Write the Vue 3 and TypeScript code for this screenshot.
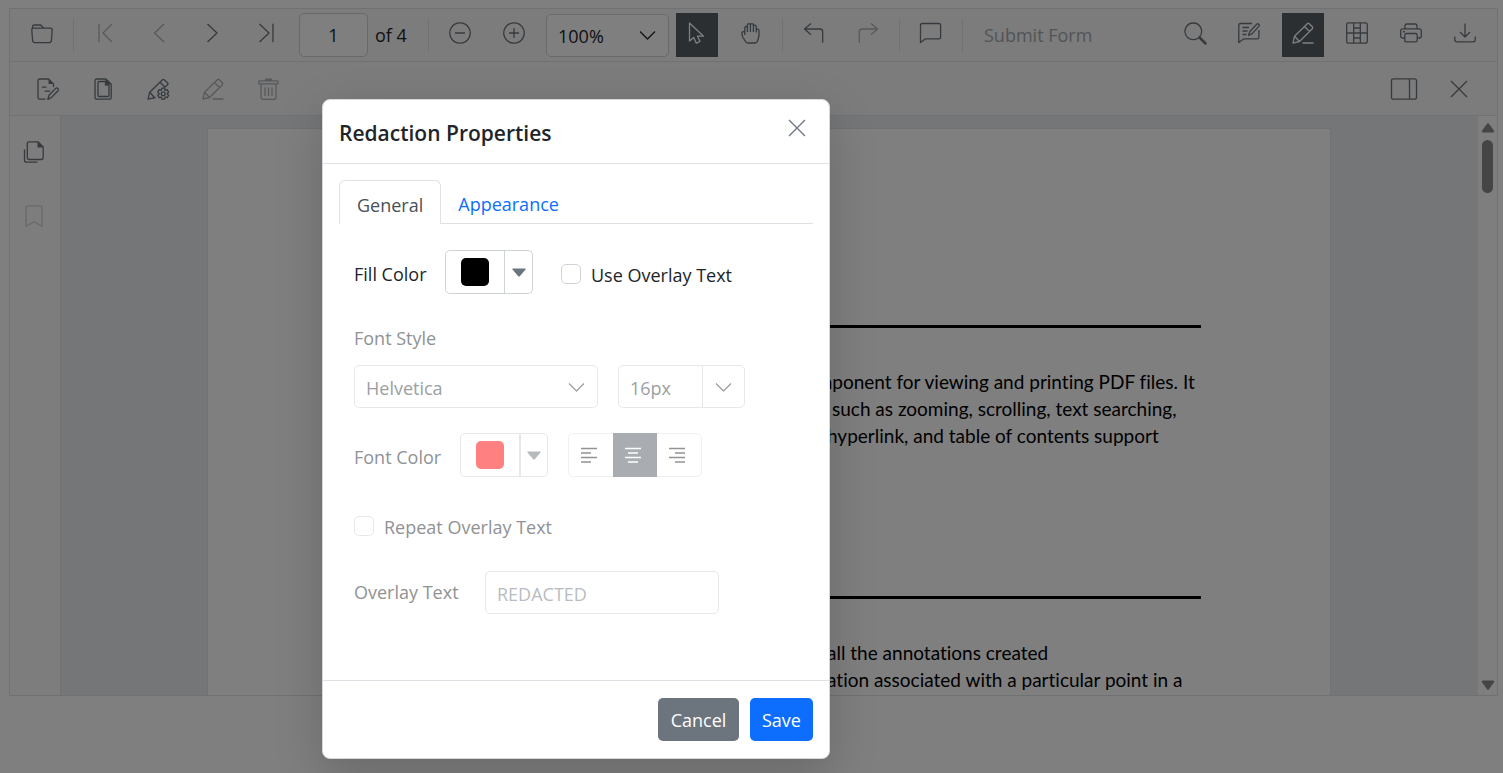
<script setup lang="ts">
import { h, ref, type FunctionalComponent } from 'vue'

interface Glyph {
  line: string
  fill?: string
  bold?: string
}

function gear(cx: number, cy: number): string {
  const points: string[] = []
  for (let i = 0; i < 6; i++) {
    const base = (i * Math.PI) / 3 - Math.PI / 2
    for (const [radius, offset] of [[4, -0.45], [5.7, -0.26], [5.7, 0.26], [4, 0.45]]) {
      const a = base + offset
      points.push(`${(cx + radius * Math.cos(a)).toFixed(2)} ${(cy + radius * Math.sin(a)).toFixed(2)}`)
    }
  }
  return `M${points.join('L')}z`
}

const glyphs: Record<string, Glyph> = {
  folder: { line: 'M.8 8.2q-.2-2 1.8-2h16.800q2 0 1.800 2l-.8 10.200q-.2 2.200-2.200 2.200H3.800Q1.800 20.600 1.600 18.400zM1.500 6.500V5q0-2 2-2h5.500q1 0 1.800 1.200t2.500 2' },
  first: { line: 'M5 1.800V20.200M18 2 9 11l9 9' },
  prev: { line: 'M16 2 6.500 11 16 20' },
  next: { line: 'M5.500 2 15 11l-9.500 9' },
  last: { line: 'M3.500 2l9.500 9-9.500 9M17 1.800V20.200' },
  minus: { line: 'M11 .8a10.200 10.200 0 1 0 .01 0zM6 11h10' },
  plus: { line: 'M11 .8a10.200 10.200 0 1 0 .01 0zM6 11h10M11 6v10' },
  cursor: { line: 'M3.500 1V19L7.700 15.500l2.600 5.700 3.700-1.700-2.500-5.300h6z' },
  hand: { line: 'M4.800 13V5.800a1.300 1.300 0 0 1 2.600 0V10M7.400 6V3.100a1.500 1.500 0 0 1 3 0V10M10.400 3.100a1.500 1.500 0 0 1 3 0V10M13.400 4.500a1.400 1.400 0 0 1 2.800 0V10.500M16.200 8.500a1.400 1.400 0 0 1 2.800 0V14l-1.500 5q-.6 2-2.500 2H8q-1.600 0-2.300-1.300L3 15.500Q1.900 13.500 1.900 11a1.400 1.400 0 0 1 2.900 0' },
  undo: { line: 'M8 1.500 1.500 7 8 12.700M1.500 7H17q2.700 0 2.700 2.700V20.700' },
  redo: { line: 'M14 1.500 20.500 7 14 12.700M20.500 7H5Q2.300 7 2.300 9.700V20.700' },
  comment: { line: 'M.5 20.500V3.200Q.5 1.500 2.200 1.500h16.700q1.700 0 1.700 1.700v12q0 1.700-1.700 1.700H5.200z' },
  search: { line: 'M9.300 1a8.300 8.300 0 1 0 .01 0z', bold: 'M15.500 15.500l6 6' },
  commentEdit: { line: 'M14 1.500H2.500Q.8 1.500.8 3.200V20.500l4.700-3.600h13.700q1.700 0 1.700-1.700V8M4.500 5.500H11M4.500 9H9.500M4.500 12.500h4M10.500 13.500l1.200-3.800 7-7.500q1-1 2.100 0t0 2.200l-6.600 7.200z' },
  pencil: { line: 'M1 21.200l1.500-7L15.300 1.700q1-.9 2 0l3 3q.9 1 0 2L7.500 19.500zM12.500 4.500l5 5M2.500 14.200l5 5.300M10.500 21H21.500' },
  table: { line: 'M2.700.8H19.300q2 0 2 2V19.200q0 2-2 2H2.700q-2 0-2-2V2.800q0-2 2-2zM7.700.8V21.200M14.300.8V21.200M.7 11H21.300M7.700 6h6.600M7.700 16h6.600' },
  print: { line: 'M5 6.800V4q0-2 2-2h8q2 0 2 2V6.800M4.800 16H2.700q-2 0-2-2V8.800q0-2 2-2H19.300q2 0 2 2V14q0 2-2 2H17.200M6.500 11.500h9q1.700 0 1.700 1.700v5q0 1.700-1.700 1.700h-9q-1.700 0-1.700-1.700v-5q0-1.700 1.700-1.700z', fill: 'M3 9h2v1.500H3z' },
  download: { line: 'M11 1.500V15M6 10l5 5 5-5M.8 14.500v3q0 2.300 2.300 2.300H19q2.300 0 2.300-2.300v-3' },
  redactText: { line: 'M8.500 21.200H3q-2 0-2-2V3Q1 1 3 1h8.500l5 5v3M5 9.200h4.500M7.700 13.200h5.500M10.800 21.300l1.200-4 6.700-6.900q1.200-1 2.300 0t0 2.300l-6.700 6.900z', fill: 'M11.500 1v5h5z' },
  redactPages: { line: 'M5 1h9l5.200 5.200V19.200q0 2-2 2H5q-2 0-2-2V3Q3 1 5 1zM7 3.500h6.500V7H17V17.500q0 1-1 1H7q-1 0-1-1V4.500q0-1 1-1z', fill: 'M13.500 1v5.500h5.500z' },
  redactSetup: { line: 'M8.500 19.500 1 21.200l1.700-7L15.500 1.700q.8-.7 1.600 0L20.700 5q.8.800 0 1.600L17.500 9.500M13 4.300l5 5M2.700 14.200l5 5.500M14.300 15.700a1.900 1.900 0 1 0 3.800 0 1.900 1.900 0 1 0-3.800 0z' + gear(16.200, 15.700) },
  trash: { line: 'M2 2.800H21v3H2zM4 5.800V19.300q0 2 2 2h11q2 0 2-2V5.800M8 9.500v8.500M11.500 9.500v8.500M15 9.500v8.500', fill: 'M8 .5h7v2.500H8z' },
  panel: { line: 'M.5.800H21.500q2 0 2 2V19.200q0 2-2 2H.5q-2 0-2-2V2.800q0-2 2-2zM16.500.800V21.200' },
  close: { line: 'M3 3l16 16M19 3 3 19' },
  thumbnails: { line: 'M6.300.8H15l5.200 5.200V16.500q0 2-2 2H6.300q-2 0-2-2V2.800q0-2 2-2zM1.500 8.500V19.200q0 2 2 2H14.500', fill: 'M14.500.8V6.500h5.700z' },
  bookmark: { line: 'M3 21.200V2.800q0-2 2-2H17q2 0 2 2V21.200l-8-4.500z' },
  chevron: { line: 'M3 7.500l7.500 7.500 7.500-7.500' },
  caret: { line: '', fill: 'M5 7.500h12q1 .2.500 1L12 15q-1 1-2 0L4.500 8.500Q4 7.700 5 7.500z' },
  alignLeft: { line: 'M3 4.500H19M3 9h10M3 13.500H19M3 18h10' },
  alignCenter: { line: 'M3 4.500H19M6 9h10M3 13.500H19M6 18h10' },
  alignRight: { line: 'M3 4.500H19M9 9h10M3 13.500H19M9 18h10' },
}

const Icon: FunctionalComponent<{ name: string }> = (props) => {
  const g = glyphs[props.name]
  return h('svg', { viewBox: '0 0 22 22', width: 22, height: 22, 'aria-hidden': 'true', overflow: 'visible' }, [
    h('path', { d: g.line, fill: 'none', stroke: 'currentColor', 'stroke-width': 1.3, 'stroke-linejoin': 'round' }),
    g.fill ? h('path', { d: g.fill, fill: 'currentColor' }) : null,
    g.bold ? h('path', { d: g.bold, fill: 'none', stroke: 'currentColor', 'stroke-width': 2.5, 'stroke-linecap': 'round' }) : null,
  ])
}
Icon.props = ['name']

interface Tool {
  icon: string
  label: string
  off?: boolean
  on?: boolean
}

const navTools: Tool[] = [
  { icon: 'first', label: 'First page', off: true },
  { icon: 'prev', label: 'Previous page', off: true },
  { icon: 'next', label: 'Next page' },
  { icon: 'last', label: 'Last page' },
]
const rightTools: Tool[] = [
  { icon: 'search', label: 'Search' },
  { icon: 'commentEdit', label: 'Annotations' },
  { icon: 'pencil', label: 'Redaction', on: true },
  { icon: 'table', label: 'Form fields' },
  { icon: 'print', label: 'Print' },
  { icon: 'download', label: 'Download' },
]
const redactTools: Tool[] = [
  { icon: 'redactText', label: 'Mark for redaction' },
  { icon: 'redactPages', label: 'Redact pages' },
  { icon: 'redactSetup', label: 'Redaction properties' },
  { icon: 'pencil', label: 'Apply redaction', off: true },
  { icon: 'trash', label: 'Delete', off: true },
]

const pageNumber = ref('1')
const fontSize = ref('16px')
const useOverlay = ref(false)
const repeatOverlay = ref(false)
</script>

<template>
  <div class="app">
    <main class="viewer">
      <div class="toolbar main-bar">
        <button class="tool" aria-label="Open file"><Icon name="folder" /></button>
        <span class="sep"></span>
        <button v-for="t in navTools" :key="t.icon" class="tool" :disabled="t.off" :aria-label="t.label"><Icon :name="t.icon" /></button>
        <label class="pager"><input v-model="pageNumber" class="page-input" aria-label="Page number" /><span>of 4</span></label>
        <span class="sep"></span>
        <button class="tool" aria-label="Zoom out"><Icon name="minus" /></button>
        <button class="tool" aria-label="Zoom in"><Icon name="plus" /></button>
        <div class="pick zoom-pick">
          <select aria-label="Zoom level"><option>100%</option></select>
          <Icon name="chevron" class="pick-icon" />
        </div>
        <button class="tool on" aria-label="Select"><Icon name="cursor" /></button>
        <button class="tool" aria-label="Pan"><Icon name="hand" /></button>
        <span class="sep"></span>
        <button class="tool" aria-label="Undo"><Icon name="undo" /></button>
        <button class="tool" disabled aria-label="Redo"><Icon name="redo" /></button>
        <span class="sep"></span>
        <button class="tool" aria-label="Comment"><Icon name="comment" /></button>
        <span class="sep"></span>
        <button class="submit" disabled>Submit Form</button>
        <div class="right">
          <button v-for="t in rightTools" :key="t.icon" class="tool" :class="{ on: t.on }" :aria-label="t.label"><Icon :name="t.icon" /></button>
        </div>
      </div>
      <div class="toolbar redact-bar">
        <button v-for="t in redactTools" :key="t.icon" class="tool" :disabled="t.off" :aria-label="t.label"><Icon :name="t.icon" /></button>
        <div class="right">
          <button class="tool" aria-label="Redaction panel"><Icon name="panel" /></button>
          <button class="tool" aria-label="Close toolbar"><Icon name="close" /></button>
        </div>
      </div>
      <div class="workspace">
        <nav class="side">
          <button class="tool" aria-label="Thumbnails"><Icon name="thumbnails" /></button>
          <button class="tool faint" disabled aria-label="Bookmarks"><Icon name="bookmark" /></button>
        </nav>
        <div class="canvas">
          <article class="page">
            <hr />
            <div class="para">
              <p class="l1">component for viewing and printing PDF files. It</p>
              <p class="l2">such as zooming, scrolling, text searching,</p>
              <p class="l3">hyperlink, and table of contents support</p>
            </div>
            <hr />
            <div class="para">
              <p class="l3">all the annotations created</p>
              <p class="l3">ation associated with a particular point in a</p>
            </div>
          </article>
        </div>
        <div class="scroll">
          <svg width="14" height="10" viewBox="0 0 14 10"><path d="M6 .8q1-1 2 0l5 7q.6 1.700-1 1.700H2Q.4 9.500 1 7.800z" fill="#8a8a8a" /></svg>
          <div class="thumb"></div>
          <svg class="down" width="14" height="10" viewBox="0 0 14 10"><path d="M6 9.200q1 1 2 0l5-7Q13.600.5 12 .5H2Q.4.500 1 2.200z" fill="#8a8a8a" /></svg>
        </div>
      </div>
    </main>

    <div class="shade"></div>
    <section class="dialog" role="dialog" aria-labelledby="dlg-title">
      <header>
        <h1 id="dlg-title">Redaction Properties</h1>
        <button class="close" aria-label="Close"><Icon name="close" /></button>
      </header>
      <div class="body">
        <div class="tabs" role="tablist">
          <button role="tab" class="tab active" aria-selected="true">General</button>
          <button role="tab" class="tab" aria-selected="false">Appearance</button>
        </div>
        <form class="form" @submit.prevent>
          <div class="row fill-row">
            <span>Fill Color</span>
            <div class="split">
              <button type="button" class="swatch-btn" aria-label="Fill color"><span class="swatch black"></span></button>
              <button type="button" class="caret-btn" aria-label="Choose fill color"><Icon name="caret" /></button>
            </div>
            <label class="check"><input v-model="useOverlay" type="checkbox" /><span>Use Overlay Text</span></label>
          </div>
          <label class="muted font-label" for="font">Font Style</label>
          <div class="row font-row">
            <div class="pick font-pick">
              <select id="font" disabled><option>Helvetica</option></select>
              <Icon name="chevron" class="pick-icon" />
            </div>
            <div class="split combo">
              <input v-model="fontSize" disabled aria-label="Font size" />
              <button type="button" disabled aria-label="Choose font size"><Icon name="chevron" /></button>
            </div>
          </div>
          <div class="row color-row muted">
            <span>Font Color</span>
            <div class="split light">
              <button type="button" class="swatch-btn" disabled aria-label="Font color"><span class="swatch red"></span></button>
              <button type="button" class="caret-btn" disabled aria-label="Choose font color"><Icon name="caret" /></button>
            </div>
            <div class="aligns">
              <button type="button" disabled aria-label="Align left"><Icon name="alignLeft" /></button>
              <button type="button" disabled class="on" aria-label="Align center"><Icon name="alignCenter" /></button>
              <button type="button" disabled aria-label="Align right"><Icon name="alignRight" /></button>
            </div>
          </div>
          <label class="check muted repeat"><input v-model="repeatOverlay" type="checkbox" disabled /><span>Repeat Overlay Text</span></label>
          <div class="row overlay-row muted">
            <label for="overlay">Overlay Text</label>
            <input id="overlay" class="text" placeholder="REDACTED" disabled />
          </div>
        </form>
      </div>
      <footer>
        <button class="btn cancel">Cancel</button>
        <button class="btn save">Save</button>
      </footer>
    </section>
  </div>
</template>

<style>
body {
  margin: 0;
  background: #fff;
}
</style>

<style scoped>
* {
  box-sizing: border-box;
}
.app {
  min-height: 100vh;
  padding: 8px 5px 0 9px;
  position: relative;
  overflow: hidden;
  font-family: "Open Sans", "Noto Sans", sans-serif;
  font-size: 18px;
  line-height: 24px;
  color: #212529;
}
button,
input,
select {
  font: inherit;
  color: inherit;
  margin: 0;
  padding: 0;
  border: 0;
  background: none;
  border-radius: 0;
  min-width: 0;
}
.viewer {
  height: 89vh;
  display: flex;
  flex-direction: column;
  border: 1px solid #dee2e6;
}
.toolbar {
  display: flex;
  align-items: center;
  background: #f8f9fa;
  border-bottom: 1px solid #dee2e6;
  flex: none;
}
.main-bar {
  height: 53px;
  padding: 0 5px;
}
.redact-bar {
  height: 54px;
  padding: 0 17px;
  gap: 13px;
}
.tool {
  width: 42px;
  height: 44px;
  display: flex;
  align-items: center;
  justify-content: center;
  color: #6c757d;
  flex: none;
}
.main-bar .tool {
  margin: 0 6px;
  padding-bottom: 4px;
}
.redact-bar .tool {
  height: 42px;
}
.tool:disabled {
  color: #adb1b5;
}
.tool.on {
  background: #565e64;
  color: #fff;
}
.sep {
  width: 1px;
  height: 33px;
  background: #dee2e6;
  margin: 0 4px;
  flex: none;
}
.pager {
  display: flex;
  align-items: center;
  gap: 7px;
  width: 130px;
  padding-left: 5px;
}
.page-input {
  width: 69px;
  height: 44px;
  border: 1px solid #ced4da;
  border-radius: 5px;
  text-align: center;
  background: #fff;
}
.pick {
  display: grid;
  align-items: center;
}
.pick > * {
  grid-area: 1 / 1;
}
.pick select {
  appearance: none;
  width: 100%;
  height: 43px;
  border: 1px solid #ced4da;
  border-radius: 5px;
  padding: 2px 40px 0 11px;
  background: #fff;
  opacity: 1;
}
.pick-icon {
  justify-self: end;
  margin-right: 10px;
  pointer-events: none;
}
.zoom-pick {
  width: 123px;
  margin: 0 1px 0 5px;
}
.submit {
  margin-left: 17px;
  color: #a5a9ad;
  white-space: nowrap;
}
.right {
  display: flex;
  margin-left: auto;
}
.redact-bar .right {
  gap: 13px;
}
.workspace {
  flex: 1;
  display: flex;
  min-height: 0;
}
.side {
  width: 51px;
  background: #fafafb;
  border-right: 1px solid #dee2e6;
  display: flex;
  flex-direction: column;
  align-items: center;
  gap: 20px;
  padding: 14px 3px 0 0;
}
.tool.faint {
  color: #cdd0d3;
}
.canvas {
  flex: 1;
  background: #e9ecef;
  padding: 12px 147px 0 146px;
  overflow: hidden;
}
.page {
  background: #fff;
  border: 1px solid #e2e5e8;
  min-height: 600px;
  padding: 196px 129px 0;
  font-family: Lato, sans-serif;
  font-size: 19px;
  font-variant-ligatures: none;
  line-height: 27px;
  color: #000;
  white-space: nowrap;
}
.page hr {
  border: 0;
  height: 3px;
  margin: 0;
  background: #000;
}
.page p {
  margin: 0;
}
.para {
  padding-top: 40px;
  height: 268px;
}
.l1 {
  padding-left: 460px;
}
.l2 {
  padding-left: 495px;
}
.l3 {
  padding-left: 490px;
}
.scroll {
  width: 19px;
  background: #fdfdfd;
  display: flex;
  flex-direction: column;
  align-items: center;
  padding: 7px 0 5px;
}
.thumb {
  width: 11px;
  height: 53px;
  margin-top: 7px;
  border-radius: 6px;
  background: #8a8a8a;
}
.down {
  margin-top: auto;
}
.shade {
  position: absolute;
  inset: 0;
  background: rgba(0, 0, 0, 0.5);
}
.dialog {
  position: absolute;
  left: 322px;
  top: 99px;
  width: 508px;
  background: #fff;
  border: 1px solid #d5d7da;
  border-radius: 8px;
  box-shadow: 0 16px 48px rgba(0, 0, 0, 0.175);
}
.dialog header {
  display: flex;
  justify-content: space-between;
  height: 64px;
  padding: 17px 21px 0 16px;
  border-bottom: 1px solid #dee2e6;
}
h1 {
  margin: 0;
  font-size: 21px;
  line-height: 32px;
  font-weight: 600;
}
.close {
  width: 22px;
  height: 22px;
  color: #6c757d;
}
.body {
  height: 516px;
  padding: 16px 16px 0;
}
.tabs {
  display: flex;
  height: 44px;
  border-bottom: 1px solid #dee2e6;
}
.tab {
  height: 44px;
  padding: 4px 17px 0;
  color: #0d6efd;
}
.tab.active {
  color: #495057;
  background: #fff;
  border: 1px solid #dee2e6;
  border-bottom: 0;
  border-radius: 6px 6px 0 0;
}
.form {
  padding: 26px 15px 0;
}
.row {
  display: flex;
  align-items: center;
}
.muted {
  color: #909294;
}
.split {
  display: flex;
  width: 88px;
  height: 44px;
  border: 1px solid #ced4da;
  border-radius: 5px;
  flex: none;
}
.split button {
  display: flex;
  align-items: center;
  justify-content: center;
}
.swatch-btn {
  width: 58px;
}
.caret-btn {
  flex: 1;
  border-left: 1px solid #ced4da;
  color: #6c757d;
}
.swatch {
  width: 28px;
  height: 28px;
  border-radius: 5px;
}
.black {
  background: #000;
}
.red {
  background: #ff8080;
}
.fill-row > span,
.color-row > span {
  width: 91px;
  padding-top: 4px;
  white-space: nowrap;
}
.color-row > span {
  width: 106px;
}
.fill-row .split {
  margin-right: 28px;
}
.check {
  display: flex;
  align-items: center;
  gap: 10px;
  white-space: nowrap;
}
.fill-row .check {
  padding-top: 3px;
}
.check input {
  appearance: none;
  width: 20px;
  height: 20px;
  border: 1px solid #ced4da;
  border-radius: 5px;
  flex: none;
}
.check span {
  padding-top: 2px;
}
.check.muted input {
  border-color: #e6e9ec;
}
.font-label {
  display: block;
  margin-top: 30px;
  line-height: 28px;
}
.font-row {
  margin-top: 13px;
  gap: 20px;
  color: #9b9fa3;
}
.font-pick {
  width: 244px;
}
.font-pick select,
.combo,
.light,
.text {
  border-color: #e6e9ec;
}
.combo {
  width: 127px;
  height: 43px;
}
.combo input {
  width: 83px;
  padding: 2px 0 0 11px;
}
.combo button {
  flex: 1;
  border-left: 1px solid #e6e9ec;
}
.color-row {
  margin-top: 25px;
}
.light {
  margin-right: 20px;
}
.light .caret-btn {
  border-left: 2px solid #e6e9ec;
  color: #b5babe;
}
.aligns {
  display: flex;
  width: 134px;
  height: 44px;
  border: 1px solid #eff1f3;
  border-radius: 5px;
}
.aligns button {
  flex: 1;
  display: flex;
  align-items: center;
  justify-content: center;
  color: #909294;
  padding-right: 4px;
}
.aligns .on {
  background: #a9adb1;
  color: #fff;
  margin: -1px 0;
}
.repeat {
  margin-top: 37px;
  height: 24px;
}
.overlay-row {
  margin-top: 33px;
}
.overlay-row label {
  width: 131px;
  padding-bottom: 2px;
}
.text {
  width: 234px;
  height: 43px;
  border: 1px solid #e6e9ec;
  border-radius: 5px;
  padding: 2px 12px 0 11px;
}
.text::placeholder {
  color: #b8bcc0;
  opacity: 1;
}
.dialog footer {
  display: flex;
  justify-content: flex-end;
  gap: 11px;
  padding: 17px 16px;
  border-top: 1px solid #dee2e6;
}
.btn {
  height: 43px;
  border-radius: 5px;
  color: #fff;
}
.cancel {
  width: 81px;
  background: #6c757d;
}
.save {
  width: 63px;
  background: #0d6efd;
}
</style>
